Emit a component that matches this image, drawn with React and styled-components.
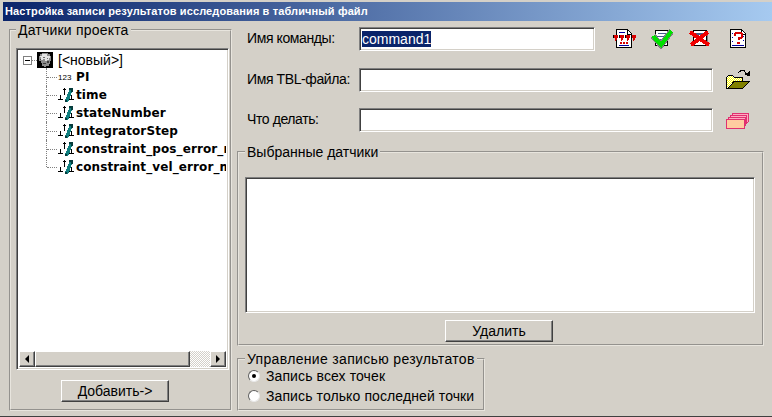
import React from 'react';
import styled, { createGlobalStyle } from 'styled-components';

const GlobalStyle = createGlobalStyle`
  html, body {
    margin: 0;
    padding: 0;
    background: #d4d0c8;
  }
`;

const Window = styled.div`
  width: 772px;
  height: 417px;
  box-sizing: border-box;
  padding: 2px 0 0 3px;
  background: #d4d0c8;
  border-bottom: 1px solid #404040;
  font-family: "Liberation Sans", sans-serif;
  font-size: 14px;
  color: #000;
  overflow: hidden;
`;

const TitleBar = styled.div`
  height: 19px;
  line-height: 19px;
  padding-left: 2px;
  color: #fff;
  font-size: 11px;
  letter-spacing: 0.12px;
  font-weight: bold;
  white-space: nowrap;
  background: linear-gradient(90deg, #0a246a, #a6caf0);
`;

const Content = styled.div`
  display: flex;
  gap: 5px;
  padding: 2px 0 0 6px;
`;

const Group = styled.fieldset`
  box-sizing: border-box;
  margin: 0;
  min-width: 0;
  padding: 0;
  width: ${p => p.$w}px;
  height: ${p => p.$h}px;
  border: 2px groove #e8e5de;
`;

const Legend = styled.legend`
  height: 14px;
  line-height: 14px;
  padding: 0 2px;
  margin-left: ${p => p.$left || 6}px;
  letter-spacing: ${p => p.$spacing || 0}px;
  white-space: nowrap;
`;

const LeftColumn = styled.div`
  display: flex;
  flex-direction: column;
`;

const RightColumn = styled.div`
  display: flex;
  flex-direction: column;
  width: 527px;
`;

const Sunken = styled.div`
  box-sizing: border-box;
  background: #fff;
  border-style: solid;
  border-width: 1px;
  border-color: #808080 #fff #fff #808080;
  box-shadow: inset 1px 1px 0 #404040, inset -1px -1px 0 #d4d0c8;
`;

const TreeBox = styled(Sunken)`
  width: 213px;
  height: 322px;
  margin: 11px 0 0 5px;
  padding: 2px;
  display: flex;
  flex-direction: column;
`;

const Tree = styled.div`
  flex: 1;
  overflow: hidden;
  padding: 0 0 0 4px;
`;

const RootRow = styled.div`
  display: flex;
  align-items: center;
  height: 18px;
`;

const Expander = styled.span`
  box-sizing: border-box;
  width: 9px;
  height: 9px;
  border: 1px solid #808080;
  background: #fff;
  display: flex;
  align-items: center;
  justify-content: center;
  flex: none;
  &::before {
    content: '';
    width: 5px;
    height: 1px;
    background: #000;
  }
`;

const RootDots = styled.span`
  width: 5px;
  border-top: 1px dotted #808080;
  flex: none;
`;

const RootLabel = styled.span`
  margin-left: 5px;
  white-space: nowrap;
`;

const Branch = styled.div`
  padding-left: 23px;
  margin-top: -1px;
`;

const Leaf = styled.div`
  display: flex;
  align-items: center;
  height: 18px;
  white-space: nowrap;
  font-family: "DejaVu Sans", sans-serif;
  font-size: 12px;
  letter-spacing: 0.1px;
  font-weight: bold;
  position: relative;
  &::before {
    content: '';
    width: 11px;
    height: ${p => (p.$last ? '9px' : '18px')};
    align-self: flex-start;
    border-left: 1px dotted #808080;
    flex: none;
    box-sizing: border-box;
  }
  &::after {
    content: '';
    position: absolute;
    left: 1px;
    top: 9px;
    width: 10px;
    border-top: 1px dotted #808080;
  }
`;

const LeafIcon = styled.span`
  width: 16px;
  height: 16px;
  margin: 0 2px 0 1px;
  flex: none;
  display: flex;
  align-items: center;
`;

const NumberIcon = styled.span`
  font-family: "Liberation Sans", sans-serif;
  font-size: 8px;
  font-weight: normal;
`;

const ScrollBar = styled.div`
  display: flex;
  height: 16px;
  flex: none;
  background-color: #eceae6;
  background-image: repeating-conic-gradient(#d4d0c8 0 25%, #fff 0 50%);
  background-size: 2px 2px;
`;

const Raised = styled.div`
  box-sizing: border-box;
  background: #d4d0c8;
  border-style: solid;
  border-width: 1px;
  border-color: #fff #404040 #404040 #fff;
  box-shadow: inset -1px -1px 0 #808080;
`;

const ScrollArrow = styled(Raised)`
  width: 16px;
  flex: none;
  display: flex;
  align-items: center;
  justify-content: center;
  &::before {
    content: '';
    border-style: solid;
    border-color: transparent;
    border-width: 4px 0 4px 4px;
    border-left-color: #000;
    transform: ${p => (p.$left ? 'scaleX(-1)' : 'none')};
  }
`;

const ScrollThumb = styled(Raised)`
  width: 155px;
  flex: none;
`;

const ScrollTrack = styled.div`
  flex: 1;
`;

const Button = styled(Raised).attrs({ as: 'button' })`
  display: block;
  width: 108px;
  height: 22px;
  padding: 0;
  font: inherit;
  color: #000;
`;

const AddButton = styled(Button)`
  margin: 10px 0 0 50px;
`;

const DeleteButton = styled(Button)`
  margin: 7px 0 0 206px;
`;

const FormRow = styled.div`
  display: flex;
  align-items: center;
  height: 24px;
  padding-left: 10px;
  margin-bottom: ${p => p.$gap}px;
  margin-top: ${p => p.$top || 0}px;
`;

const FieldLabel = styled.label`
  width: 112px;
  flex: none;
  padding-bottom: 3px;
  letter-spacing: -0.4px;
  white-space: nowrap;
`;

const Field = styled(Sunken)`
  width: ${p => p.$w}px;
  height: 24px;
  flex: none;
  padding: 3px 0 0 2px;
  line-height: 16px;
`;

const Selected = styled.span`
  display: inline-block;
  background: #0a246a;
  color: #fff;
`;

const Tools = styled.div`
  display: flex;
  margin-left: 18px;
  gap: 13px;
  & > :last-child {
    margin-left: 2px;
  }
`;

const IconSlot = styled.span`
  display: flex;
  width: 24px;
  height: 22px;
  margin-left: ${p => p.$left || 0}px;
  flex: none;
`;

const SensorList = styled(Sunken)`
  width: 510px;
  height: 136px;
  margin: 18px 0 0 6px;
`;

const ControlGroup = styled(Group)`
  margin-top: 6px;
`;

const RadioRow = styled.div`
  display: flex;
  align-items: center;
  height: 20px;
  padding-left: 9px;
  letter-spacing: 0.1px;
  white-space: nowrap;
`;

const Radio = styled.span`
  box-sizing: border-box;
  width: 12px;
  height: 12px;
  margin-right: 6px;
  flex: none;
  border-radius: 50%;
  background: #fff;
  border: 1px solid;
  border-color: #606060 #e8e8e8 #e8e8e8 #606060;
  display: flex;
  align-items: center;
  justify-content: center;
  &::before {
    content: '';
    width: 4px;
    height: 4px;
    border-radius: 50%;
    background: ${p => (p.$on ? '#000' : 'transparent')};
  }
`;

const Pixel = styled.svg`
  display: block;
  shape-rendering: crispEdges;
  flex: none;
`;

const Skull = () => (
  <Pixel width="16" height="16" viewBox="0 0 16 16">
    <rect width="16" height="16" fill="#000" />
    <path d="M5 1h6v1h2v2h1v5h-1v3h-1v2H9v1H7v-1H5v-3H4V9H2V4h1V2h2z" fill="#8c8c8c" />
    <path d="M5 2h5v2h3v2h-1v2h-2v1H8V7H6v1H4V5H3V4h2z" fill="#e4e4e4" />
    <path d="M10 9h2v2h-2zM6 11h3v1H6zM3 7h1v1H3z" fill="#3c3c3c" />
    <path d="M6 5h2v1H6zM10 6h1v1h-1z" fill="#6a6a6a" />
  </Pixel>
);

const SensorIcon = () => (
  <Pixel width="16" height="16" viewBox="0 0 16 16">
    <path d="M6 1h1v1h1v1H7v5H6V3H5V2h1zM2 8h1v4h2v1H0v-1h2zM13 8h1v4h2v1h-5v-1h2z" fill="#000" />
    <path d="M8.500 14.500L13 3" fill="none" stroke="#0f7f7f" strokeWidth="3.500" />
    <path d="M11 1h4v4h-2V3h-2zM7 13h2v2H7z" fill="#063c3c" />
  </Pixel>
);

const QuotesDocIcon = () => (
  <Pixel width="24" height="22" viewBox="0 0 24 22">
    <path d="M3.500 1.500h11l4 4v14h-15z" fill="#fff" stroke="#000" />
    <path d="M14 1v5h5" fill="none" stroke="#000" />
    <path d="M6 4h6v1H6zM6 17h10v1H6z" fill="#0000a0" />
    <path d="M1 7h4v3H4v2H3v1H2v-3H1zM7 7h4v3h-1v2H9v1H8v-3H7zM13 7h4v3h-1v2h-1v1h-1v-3h-1zM19 7h4v3h-1v2h-1v1h-1v-3h-1z" fill="#d80000" />
    <path d="M0 7h1v3H0zM6 7h1v3H6zM12 7h1v3h-1zM18 7h1v3h-1z" fill="#000" />
    <path d="M7 14h2v2H7zM10 14h2v2h-2zM13 14h2v2h-2z" fill="#d80000" />
  </Pixel>
);

const CheckIcon = () => (
  <Pixel width="24" height="22" viewBox="0 0 24 22">
    <path d="M5.500 2.500h12v15h-12z" fill="#fff" stroke="#000" />
    <path d="M8 5h8v1H8zM7 8h9v1H7zM7 11h5v1H7z" fill="#44608c" />
    <path d="M3 8l8 9L21.500 3" fill="none" stroke="#808080" strokeWidth="6" />
    <path d="M3 8l8 9L21.500 3" fill="none" stroke="#00e000" strokeWidth="4" />
  </Pixel>
);

const CrossIcon = () => (
  <Pixel width="24" height="22" viewBox="0 0 24 22">
    <path d="M9 3h12v15H9z" fill="#808080" />
    <path d="M6.500 2.500h13v15h-13z" fill="#fff" stroke="#000" />
    <path d="M8 5h10v2H8z" fill="#44608c" />
    <path d="M3 4l19 13M21 4L4 17" fill="none" stroke="#f00000" strokeWidth="4" />
  </Pixel>
);

const HelpDocIcon = () => (
  <Pixel width="24" height="22" viewBox="0 0 24 22">
    <path d="M4.500 1.500h11l4 4v14h-15z" fill="#fff" stroke="#000" />
    <path d="M15 1v5h5" fill="none" stroke="#000" />
    <path d="M6 5h1v1H6zM6 9h1v1H6zM6 13h1v1H6zM17 8h1v1h-1zM17 12h1v1h-1zM6 17h12v1H6z" fill="#0000a0" />
    <path d="M9 8V6l1-1h5l1 1v3l-1 1h-2v2" fill="none" stroke="#d80000" strokeWidth="2.500" />
    <path d="M11 14h3v2h-3z" fill="#d80000" />
  </Pixel>
);

const FolderIcon = () => (
  <Pixel width="24" height="22" viewBox="0 0 24 22">
    <defs>
      <pattern id="yellowDither" width="2" height="2" patternUnits="userSpaceOnUse">
        <rect width="2" height="2" fill="#fff" />
        <rect width="1" height="1" fill="#ffff00" />
        <rect x="1" y="1" width="1" height="1" fill="#ffff00" />
      </pattern>
    </defs>
    <path d="M12.500 3.500L15 1.500h3l2 3" fill="none" stroke="#000" />
    <path d="M18 6l6-4v5z" fill="#000" />
    <path d="M0.500 8.500l2-2h4l2 2h8v4h-9l-4 7h-3z" fill="url(#yellowDither)" stroke="#000" />
    <path d="M8.500 12.500h15l-7 7h-15z" fill="#808000" stroke="#000" />
  </Pixel>
);

const StackIcon = () => (
  <Pixel width="24" height="22" viewBox="0 0 24 22">
    <path d="M6.500 4.500h16v8l-3 3h-13z" fill="#ffa8c0" stroke="#e03070" />
    <path d="M4.500 6.500h16v8l-2 2h-14z" fill="#ffa8c0" stroke="#e03070" />
    <path d="M2.500 8.500h17v8l-1 1h-16z" fill="#ffa8c0" stroke="#e03070" />
    <path d="M0.500 10.500h18v9h-18z" fill="#ffcca0" stroke="#e03070" />
  </Pixel>
);

const sensors = ['time', 'stateNumber', 'IntegratorStep', 'constraint_pos_error_max', 'constraint_vel_error_max'];

export default function App() {
  return (
    <Window>
      <GlobalStyle />
      <TitleBar>Настройка записи результатов исследования в табличный файл</TitleBar>
      <Content>
        <LeftColumn>
          <Group $w={223} $h={388}>
            <Legend $left={5} $spacing={0.2}>Датчики проекта</Legend>
            <TreeBox>
              <Tree>
                <RootRow>
                  <Expander />
                  <RootDots />
                  <Skull />
                  <RootLabel>[&lt;новый&gt;]</RootLabel>
                </RootRow>
                <Branch>
                  <Leaf>
                    <LeafIcon><NumberIcon>123</NumberIcon></LeafIcon>
                    PI
                  </Leaf>
                  {sensors.map((name, i) => (
                    <Leaf key={name} $last={i === sensors.length - 1}>
                      <LeafIcon><SensorIcon /></LeafIcon>
                      {name}
                    </Leaf>
                  ))}
                </Branch>
              </Tree>
              <ScrollBar>
                <ScrollArrow $left />
                <ScrollThumb />
                <ScrollTrack />
                <ScrollArrow />
              </ScrollBar>
            </TreeBox>
            <AddButton>Добавить-&gt;</AddButton>
          </Group>
        </LeftColumn>
        <RightColumn>
          <FormRow $gap={17} $top={4}>
            <FieldLabel>Имя команды:</FieldLabel>
            <Field $w={236}><Selected>command1</Selected></Field>
            <Tools>
              <IconSlot><QuotesDocIcon /></IconSlot>
              <IconSlot><CheckIcon /></IconSlot>
              <IconSlot><CrossIcon /></IconSlot>
              <IconSlot><HelpDocIcon /></IconSlot>
            </Tools>
          </FormRow>
          <FormRow $gap={16}>
            <FieldLabel>Имя TBL-файла:</FieldLabel>
            <Field $w={354} />
            <IconSlot $left={13}><FolderIcon /></IconSlot>
          </FormRow>
          <FormRow $gap={13}>
            <FieldLabel>Что делать:</FieldLabel>
            <Field $w={354} />
            <IconSlot $left={13}><StackIcon /></IconSlot>
          </FormRow>
          <Group $w={527} $h={201}>
            <Legend>Выбранные датчики</Legend>
            <SensorList />
            <DeleteButton>Удалить</DeleteButton>
          </Group>
          <ControlGroup $w={248} $h={59}>
            <Legend $spacing={0.33}>Управление записью результатов</Legend>
            <RadioRow><Radio $on />Запись всех точек</RadioRow>
            <RadioRow><Radio />Запись только последней точки</RadioRow>
          </ControlGroup>
        </RightColumn>
      </Content>
    </Window>
  );
}
